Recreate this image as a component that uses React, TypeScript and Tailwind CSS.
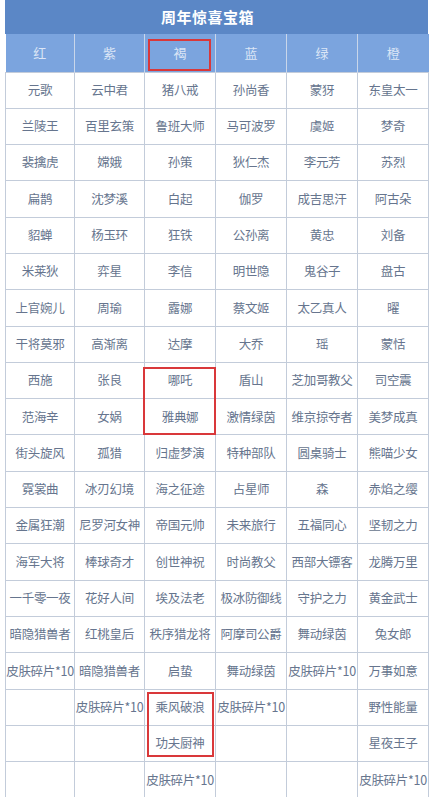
import React from 'react';

const headers = ['红', '紫', '褐', '蓝', '绿', '橙'];

const rows: string[][] = [
  ['元歌', '云中君', '猪八戒', '孙尚香', '蒙犽', '东皇太一'],
  ['兰陵王', '百里玄策', '鲁班大师', '马可波罗', '虞姬', '梦奇'],
  ['裴擒虎', '嫦娥', '孙策', '狄仁杰', '李元芳', '苏烈'],
  ['扁鹊', '沈梦溪', '白起', '伽罗', '成吉思汗', '阿古朵'],
  ['貂蝉', '杨玉环', '狂铁', '公孙离', '黄忠', '刘备'],
  ['米莱狄', '弈星', '李信', '明世隐', '鬼谷子', '盘古'],
  ['上官婉儿', '周瑜', '露娜', '蔡文姬', '太乙真人', '曜'],
  ['干将莫邪', '高渐离', '达摩', '大乔', '瑶', '蒙恬'],
  ['西施', '张良', '哪吒', '盾山', '芝加哥教父', '司空震'],
  ['范海辛', '女娲', '雅典娜', '激情绿茵', '维京掠夺者', '美梦成真'],
  ['街头旋风', '孤猎', '归虚梦演', '特种部队', '圆桌骑士', '熊喵少女'],
  ['霓裳曲', '冰刃幻境', '海之征途', '占星师', '森', '赤焰之缨'],
  ['金属狂潮', '尼罗河女神', '帝国元帅', '未来旅行', '五福同心', '坚韧之力'],
  ['海军大将', '棒球奇才', '创世神祝', '时尚教父', '西部大镖客', '龙腾万里'],
  ['一千零一夜', '花好人间', '埃及法老', '极冰防御线', '守护之力', '黄金武士'],
  ['暗隐猎兽者', '红桃皇后', '秩序猎龙将', '阿摩司公爵', '舞动绿茵', '兔女郎'],
  ['皮肤碎片*10', '暗隐猎兽者', '启蛰', '舞动绿茵', '皮肤碎片*10', '万事如意'],
  ['', '皮肤碎片*10', '乘风破浪', '皮肤碎片*10', '', '野性能量'],
  ['', '', '功夫厨神', '', '', '星夜王子'],
  ['', '', '皮肤碎片*10', '', '', '皮肤碎片*10'],
];

const colWidths = ['w-[69px]', 'w-[70px]', 'w-[71px]', 'w-[71px]', 'w-[71px]', 'w-[71px]'];

const App: React.FC = () => {
  return (
    <div
      className="w-[429px] h-[797px] overflow-hidden bg-white pl-[5px]"
      style={{ fontFamily: '"Noto Sans CJK SC", "Noto Sans", sans-serif' }}
    >
      <div className="relative w-[423px]">
        {/* Title */}
        <div className="h-[34px] bg-[#5b87c6] flex items-center justify-center pr-[18px]">
          <span className="text-[15px] font-bold text-white tracking-[0.5px]">周年惊喜宝箱</span>
        </div>

        <table className="w-[423px] table-fixed border-collapse">
          <colgroup>
            {colWidths.map((w, i) => (
              <col key={i} className={w} />
            ))}
          </colgroup>
          <thead>
            <tr className="h-[38px] bg-[#7ba4de]">
              {headers.map((h) => (
                <th
                  key={h}
                  className="border-x border-[#c9d6ea] first:border-l-0 last:border-r-0 text-[13px] font-normal text-[#dce6f6] p-0"
                >
                  {h}
                </th>
              ))}
            </tr>
          </thead>
          <tbody>
            {rows.map((r, ri) => (
              <tr key={ri} className="h-[36.3px]">
                {r.map((c, ci) => (
                  <td
                    key={ci}
                    className="border border-[#c3ccda] text-center text-[12.5px] tracking-[-0.3px] text-[#66758e] p-0 whitespace-nowrap leading-none"
                  >
                    {c}
                  </td>
                ))}
              </tr>
            ))}
          </tbody>
        </table>

        {/* Red highlight boxes */}
        <div className="absolute z-10 left-[143px] top-[39px] w-[63px] h-[32px] border-2 border-[#d9383a]" />
        <div className="absolute z-10 left-[138px] top-[367px] w-[73px] h-[68px] border-2 border-[#d9383a]" />
        <div className="absolute z-10 left-[142px] top-[692px] w-[67px] h-[65px] border-2 border-[#d9383a]" />
      </div>
    </div>
  );
};

export default App;
